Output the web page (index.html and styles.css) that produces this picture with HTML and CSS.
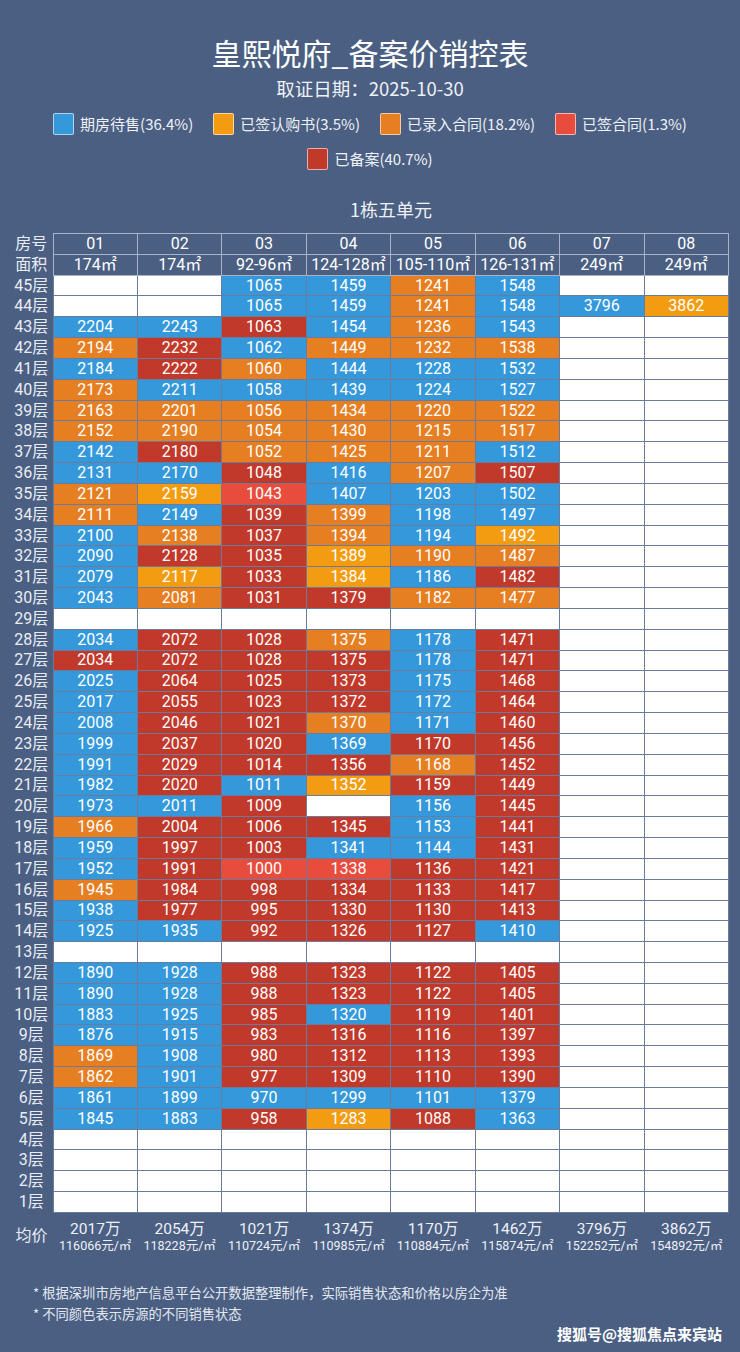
FILE: index.html
```html
<!DOCTYPE html>
<html lang="zh-CN">
<head>
<meta charset="utf-8">
<title>皇熙悦府_备案价销控表</title>
<link rel="stylesheet" href="styles.css">
</head>
<body>
<div class="page">
  <header class="head">
    <h1 class="title">皇熙悦府_备案价销控表</h1>
    <p class="date">取证日期：2025-10-30</p>
    <ul class="legend">
      <li><span class="sw b"></span>期房待售(36.4%)</li>
      <li><span class="sw y"></span>已签认购书(3.5%)</li>
      <li><span class="sw o"></span>已录入合同(18.2%)</li>
      <li><span class="sw r"></span>已签合同(1.3%)</li>
      <li><span class="sw d"></span>已备案(40.7%)</li>
    </ul>
  </header>
  <h2 class="unit">1栋五单元</h2>
  <table class="sheet">
    <colgroup><col class="lc"><col><col><col><col><col><col><col><col></colgroup>
    <thead>
      <tr><th class="fl">房号</th><th>01</th><th>02</th><th>03</th><th>04</th><th>05</th><th>06</th><th>07</th><th>08</th></tr>
      <tr><th class="fl">面积</th><th>174㎡</th><th>174㎡</th><th>92-96㎡</th><th>124-128㎡</th><th>105-110㎡</th><th>126-131㎡</th><th>249㎡</th><th>249㎡</th></tr>
    </thead>
    <tbody>
      <tr><td class="fl">45层</td><td></td><td></td><td class="b">1065</td><td class="b">1459</td><td class="o">1241</td><td class="b">1548</td><td></td><td></td></tr>
      <tr><td class="fl">44层</td><td></td><td></td><td class="b">1065</td><td class="b">1459</td><td class="o">1241</td><td class="b">1548</td><td class="b">3796</td><td class="y">3862</td></tr>
      <tr><td class="fl">43层</td><td class="b">2204</td><td class="b">2243</td><td class="d">1063</td><td class="b">1454</td><td class="o">1236</td><td class="b">1543</td><td></td><td></td></tr>
      <tr><td class="fl">42层</td><td class="o">2194</td><td class="d">2232</td><td class="b">1062</td><td class="o">1449</td><td class="o">1232</td><td class="o">1538</td><td></td><td></td></tr>
      <tr><td class="fl">41层</td><td class="b">2184</td><td class="d">2222</td><td class="o">1060</td><td class="b">1444</td><td class="b">1228</td><td class="b">1532</td><td></td><td></td></tr>
      <tr><td class="fl">40层</td><td class="o">2173</td><td class="b">2211</td><td class="b">1058</td><td class="b">1439</td><td class="b">1224</td><td class="b">1527</td><td></td><td></td></tr>
      <tr><td class="fl">39层</td><td class="o">2163</td><td class="o">2201</td><td class="o">1056</td><td class="o">1434</td><td class="o">1220</td><td class="o">1522</td><td></td><td></td></tr>
      <tr><td class="fl">38层</td><td class="o">2152</td><td class="o">2190</td><td class="o">1054</td><td class="o">1430</td><td class="o">1215</td><td class="o">1517</td><td></td><td></td></tr>
      <tr><td class="fl">37层</td><td class="b">2142</td><td class="d">2180</td><td class="o">1052</td><td class="o">1425</td><td class="o">1211</td><td class="b">1512</td><td></td><td></td></tr>
      <tr><td class="fl">36层</td><td class="b">2131</td><td class="b">2170</td><td class="d">1048</td><td class="b">1416</td><td class="o">1207</td><td class="d">1507</td><td></td><td></td></tr>
      <tr><td class="fl">35层</td><td class="o">2121</td><td class="y">2159</td><td class="r">1043</td><td class="b">1407</td><td class="b">1203</td><td class="b">1502</td><td></td><td></td></tr>
      <tr><td class="fl">34层</td><td class="o">2111</td><td class="b">2149</td><td class="d">1039</td><td class="o">1399</td><td class="b">1198</td><td class="b">1497</td><td></td><td></td></tr>
      <tr><td class="fl">33层</td><td class="b">2100</td><td class="o">2138</td><td class="d">1037</td><td class="o">1394</td><td class="b">1194</td><td class="y">1492</td><td></td><td></td></tr>
      <tr><td class="fl">32层</td><td class="b">2090</td><td class="d">2128</td><td class="d">1035</td><td class="y">1389</td><td class="o">1190</td><td class="o">1487</td><td></td><td></td></tr>
      <tr><td class="fl">31层</td><td class="b">2079</td><td class="y">2117</td><td class="d">1033</td><td class="y">1384</td><td class="b">1186</td><td class="d">1482</td><td></td><td></td></tr>
      <tr><td class="fl">30层</td><td class="b">2043</td><td class="o">2081</td><td class="d">1031</td><td class="d">1379</td><td class="o">1182</td><td class="o">1477</td><td></td><td></td></tr>
      <tr><td class="fl">29层</td><td></td><td></td><td></td><td></td><td></td><td></td><td></td><td></td></tr>
      <tr><td class="fl">28层</td><td class="b">2034</td><td class="d">2072</td><td class="d">1028</td><td class="o">1375</td><td class="b">1178</td><td class="d">1471</td><td></td><td></td></tr>
      <tr><td class="fl">27层</td><td class="d">2034</td><td class="d">2072</td><td class="d">1028</td><td class="d">1375</td><td class="b">1178</td><td class="d">1471</td><td></td><td></td></tr>
      <tr><td class="fl">26层</td><td class="b">2025</td><td class="d">2064</td><td class="d">1025</td><td class="d">1373</td><td class="b">1175</td><td class="d">1468</td><td></td><td></td></tr>
      <tr><td class="fl">25层</td><td class="b">2017</td><td class="d">2055</td><td class="d">1023</td><td class="d">1372</td><td class="b">1172</td><td class="d">1464</td><td></td><td></td></tr>
      <tr><td class="fl">24层</td><td class="b">2008</td><td class="d">2046</td><td class="d">1021</td><td class="o">1370</td><td class="b">1171</td><td class="d">1460</td><td></td><td></td></tr>
      <tr><td class="fl">23层</td><td class="b">1999</td><td class="d">2037</td><td class="d">1020</td><td class="b">1369</td><td class="d">1170</td><td class="d">1456</td><td></td><td></td></tr>
      <tr><td class="fl">22层</td><td class="b">1991</td><td class="d">2029</td><td class="d">1014</td><td class="d">1356</td><td class="o">1168</td><td class="d">1452</td><td></td><td></td></tr>
      <tr><td class="fl">21层</td><td class="b">1982</td><td class="d">2020</td><td class="b">1011</td><td class="y">1352</td><td class="d">1159</td><td class="d">1449</td><td></td><td></td></tr>
      <tr><td class="fl">20层</td><td class="b">1973</td><td class="b">2011</td><td class="d">1009</td><td></td><td class="b">1156</td><td class="d">1445</td><td></td><td></td></tr>
      <tr><td class="fl">19层</td><td class="o">1966</td><td class="d">2004</td><td class="d">1006</td><td class="d">1345</td><td class="b">1153</td><td class="d">1441</td><td></td><td></td></tr>
      <tr><td class="fl">18层</td><td class="b">1959</td><td class="d">1997</td><td class="d">1003</td><td class="b">1341</td><td class="b">1144</td><td class="d">1431</td><td></td><td></td></tr>
      <tr><td class="fl">17层</td><td class="b">1952</td><td class="d">1991</td><td class="r">1000</td><td class="r">1338</td><td class="d">1136</td><td class="d">1421</td><td></td><td></td></tr>
      <tr><td class="fl">16层</td><td class="o">1945</td><td class="d">1984</td><td class="d">998</td><td class="d">1334</td><td class="d">1133</td><td class="d">1417</td><td></td><td></td></tr>
      <tr><td class="fl">15层</td><td class="b">1938</td><td class="d">1977</td><td class="d">995</td><td class="d">1330</td><td class="d">1130</td><td class="d">1413</td><td></td><td></td></tr>
      <tr><td class="fl">14层</td><td class="b">1925</td><td class="b">1935</td><td class="d">992</td><td class="d">1326</td><td class="d">1127</td><td class="b">1410</td><td></td><td></td></tr>
      <tr><td class="fl">13层</td><td></td><td></td><td></td><td></td><td></td><td></td><td></td><td></td></tr>
      <tr><td class="fl">12层</td><td class="b">1890</td><td class="b">1928</td><td class="d">988</td><td class="d">1323</td><td class="d">1122</td><td class="d">1405</td><td></td><td></td></tr>
      <tr><td class="fl">11层</td><td class="b">1890</td><td class="b">1928</td><td class="d">988</td><td class="d">1323</td><td class="d">1122</td><td class="d">1405</td><td></td><td></td></tr>
      <tr><td class="fl">10层</td><td class="b">1883</td><td class="b">1925</td><td class="d">985</td><td class="b">1320</td><td class="d">1119</td><td class="d">1401</td><td></td><td></td></tr>
      <tr><td class="fl">9层</td><td class="b">1876</td><td class="b">1915</td><td class="d">983</td><td class="d">1316</td><td class="d">1116</td><td class="d">1397</td><td></td><td></td></tr>
      <tr><td class="fl">8层</td><td class="o">1869</td><td class="b">1908</td><td class="d">980</td><td class="d">1312</td><td class="d">1113</td><td class="d">1393</td><td></td><td></td></tr>
      <tr><td class="fl">7层</td><td class="o">1862</td><td class="b">1901</td><td class="d">977</td><td class="d">1309</td><td class="d">1110</td><td class="d">1390</td><td></td><td></td></tr>
      <tr><td class="fl">6层</td><td class="b">1861</td><td class="b">1899</td><td class="b">970</td><td class="b">1299</td><td class="b">1101</td><td class="b">1379</td><td></td><td></td></tr>
      <tr><td class="fl">5层</td><td class="b">1845</td><td class="b">1883</td><td class="d">958</td><td class="y">1283</td><td class="d">1088</td><td class="b">1363</td><td></td><td></td></tr>
      <tr><td class="fl">4层</td><td></td><td></td><td></td><td></td><td></td><td></td><td></td><td></td></tr>
      <tr><td class="fl">3层</td><td></td><td></td><td></td><td></td><td></td><td></td><td></td><td></td></tr>
      <tr><td class="fl">2层</td><td></td><td></td><td></td><td></td><td></td><td></td><td></td><td></td></tr>
      <tr><td class="fl">1层</td><td></td><td></td><td></td><td></td><td></td><td></td><td></td><td></td></tr>
    </tbody>
    <tfoot>
      <tr class="avg">
        <td class="fl">均价</td>
        <td><span class="tot">2017万</span><span class="per">116066元/㎡</span></td>
        <td><span class="tot">2054万</span><span class="per">118228元/㎡</span></td>
        <td><span class="tot">1021万</span><span class="per">110724元/㎡</span></td>
        <td><span class="tot">1374万</span><span class="per">110985元/㎡</span></td>
        <td><span class="tot">1170万</span><span class="per">110884元/㎡</span></td>
        <td><span class="tot">1462万</span><span class="per">115874元/㎡</span></td>
        <td><span class="tot">3796万</span><span class="per">152252元/㎡</span></td>
        <td><span class="tot">3862万</span><span class="per">154892元/㎡</span></td>
      </tr>
    </tfoot>
  </table>
  <div class="notes">
    <p>* 根据深圳市房地产信息平台公开数据整理制作，实际销售状态和价格以房企为准</p>
    <p>* 不同颜色表示房源的不同销售状态</p>
  </div>
  <div class="mark">搜狐号@搜狐焦点来宾站</div>
</div>
</body>
</html>
```
FILE: styles.css
```css
html, body {
  margin: 0;
  background: #4b5f83;
}
body {
  font-family: "Noto Sans CJK SC", "Noto Sans", sans-serif;
  color: #ffffff;
}
.page {
  width: 740px;
  padding-top: 32px;
}
.title {
  margin: 0;
  font-size: 30px;
  line-height: 40px;
  font-weight: 400;
  text-align: center;
}
.date {
  margin: 4px 0 0;
  font-size: 18.5px;
  line-height: 24px;
  text-align: center;
  color: #eef1f6;
}
.legend {
  list-style: none;
  margin: 13px 0 0;
  padding: 0;
  display: flex;
  flex-wrap: wrap;
  justify-content: center;
  gap: 13px 20px;
}
.legend li {
  display: flex;
  align-items: center;
  gap: 6px;
  font-size: 15px;
  line-height: 22px;
  color: #eef1f6;
}
.sw {
  width: 21px;
  height: 22px;
  box-sizing: border-box;
  border: 1px solid rgba(255, 255, 255, 0.6);
  border-radius: 2px;
}
.b { background: #3498db; }
.y { background: #f39c12; }
.o { background: #e67e22; }
.r { background: #e74c3c; }
.d { background: #c0392b; }

.unit {
  margin: 27px 0 0 53px;
  width: 676px;
  text-align: center;
  font-size: 18px;
  line-height: 24px;
  font-weight: 400;
  color: #eef1f6;
}
.sheet {
  margin: 12px 0 0 10px;
  width: 719px;
  border-collapse: collapse;
  table-layout: fixed;
  font-family: Roboto, "Noto Sans CJK SC", sans-serif;
}
.sheet .lc { width: 43px; }
.sheet tr { height: 20.83px; }
.sheet th,
.sheet td {
  padding: 0;
  font-size: 16px;
  line-height: 18px;
  font-weight: 400;
  text-align: center;
  vertical-align: middle;
  white-space: nowrap;
  color: #ffffff;
}
.sheet th {
  border: 1px solid #a7b3c7;
}
.sheet td {
  border: 1px solid #6a7c9e;
  background: #ffffff;
}
.sheet td.b { background: #3498db; }
.sheet td.y { background: #f39c12; }
.sheet td.o { background: #e67e22; }
.sheet td.r { background: #e74c3c; }
.sheet td.d { background: #c0392b; }
.sheet td.fl,
.sheet th.fl {
  border: none;
  background: transparent;
  color: #e9edf3;
}
.sheet tfoot tr.avg { height: 48px; }
.sheet tfoot td {
  border: none;
  background: transparent;
  color: #eef1f6;
}
.tot {
  display: block;
  font-size: 15.5px;
  line-height: 18px;
}
.per {
  display: block;
  font-size: 12.5px;
  line-height: 16px;
}
.notes {
  margin: 22px 0 0 33px;
  font-size: 13.3px;
  line-height: 21px;
  color: #e3e8f0;
}
.notes p {
  margin: 0;
}
.mark {
  text-align: right;
  padding-right: 18px;
  font-size: 15px;
  line-height: 20px;
  font-weight: 700;
  color: #ffffff;
}
```
